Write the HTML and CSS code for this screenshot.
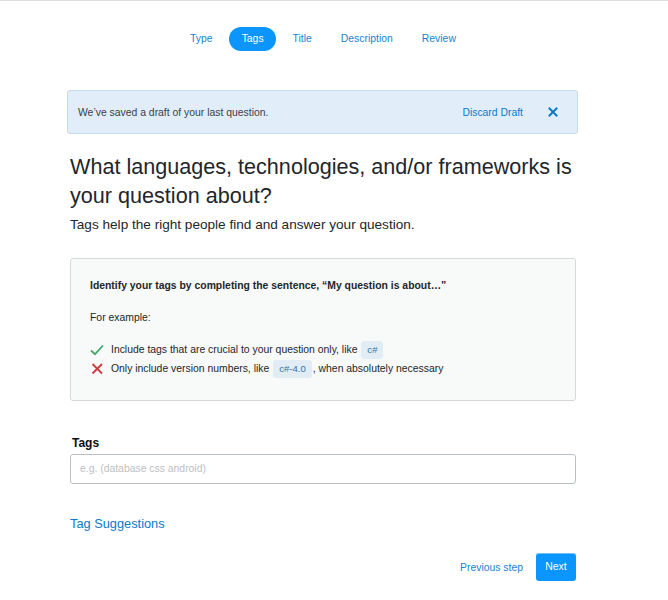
FILE: index.html
```html
<!DOCTYPE html>
<html>
<head>
<meta charset="utf-8">
<link rel="stylesheet" href="styles.css">
</head>
<body>
<div class="page">
  <nav class="steps">
    <a class="step">Type</a>
    <a class="step active">Tags</a>
    <a class="step">Title</a>
    <a class="step">Description</a>
    <a class="step">Review</a>
  </nav>

  <div class="notice">
    <span class="notice-text">We’ve saved a draft of your last question.</span>
    <a class="discard">Discard Draft</a>
    <span class="close">
      <svg width="10" height="10" viewBox="0 0 10 10"><path d="M1.5 1.5 L8.5 8.5 M8.5 1.5 L1.5 8.5" stroke="#0a7acc" stroke-width="2" stroke-linecap="square" fill="none"/></svg>
    </span>
  </div>

  <h1 class="title">What languages, technologies, and/or frameworks is your question about?</h1>
  <p class="subtitle">Tags help the right people find and answer your question.</p>

  <div class="guide">
    <p class="guide-head">Identify your tags by completing the sentence, “My question is about…”</p>
    <p class="guide-example">For example:</p>
    <ul class="rules">
      <li class="rule">
        <svg class="icon" width="14" height="12" viewBox="0 0 14 12"><path d="M1 6.5 L5 10.2 L13 1.5" stroke="#48a868" stroke-width="1.8" fill="none"/></svg>
        <span>Include tags that are crucial to your question only, like <code class="chip">c#</code></span>
      </li>
      <li class="rule">
        <svg class="icon" width="14" height="12" viewBox="0 0 14 12"><path d="M2.5 1 L12 10.5 M12 1 L2.5 10.5" stroke="#d0393e" stroke-width="1.8" fill="none"/></svg>
        <span>Only include version numbers, like <code class="chip">c#-4.0</code>, when absolutely necessary</span>
      </li>
    </ul>
  </div>

  <label class="field-label">Tags</label>
  <div class="input">e.g. (database css android)</div>

  <a class="suggest">Tag Suggestions</a>

  <div class="actions">
    <a class="prev">Previous step</a>
    <span class="next">Next</span>
  </div>
</div>
</body>
</html>
```

FILE: styles.css
```css
* { box-sizing: border-box; }
html, body { margin: 0; padding: 0; background: #fff; }
body {
  font-family: "Liberation Sans", Arial, sans-serif;
  color: #232629;
  border-top: 1px solid #dcdfe2;
}
.page {
  width: 506px;
  margin-left: 70px;
  padding-top: 26px;
}
.steps {
  display: flex;
  justify-content: center;
  gap: 4px;
}
.step {
  height: 24px;
  line-height: 24px;
  padding: 0 12.5px;
  border-radius: 1000px;
  font-size: 10.4px;
  color: #1a7fd4;
}
.step.active {
  background: #0a95ff;
  color: #fff;
}
.notice {
  margin: 39px -2px 0 -3px;
  height: 44px;
  display: flex;
  align-items: center;
  background: #e1eefa;
  border: 1px solid #c5dbee;
  border-radius: 3px;
  padding: 0 10px;
  font-size: 10.4px;
}
.notice-text { flex: 1; color: #3b4045; }
.discard { color: #0a7acc; margin-right: 25px; }
.close { display: flex; width: 10px; margin-right: 9px; }
.title {
  margin: 18px 0 0;
  font-size: 21.6px;
  line-height: 29px;
  font-weight: normal;
  color: #232629;
}
.subtitle {
  margin: 6px 0 0;
  font-size: 13.6px;
  line-height: 17px;
  color: #232629;
}
.guide {
  margin-top: 25px;
  height: 143px;
  background: #f8f9f9;
  border: 1px solid #d6d9dc;
  border-radius: 3px;
  padding: 19px 19px 0;
  font-size: 10.4px;
  color: #232629;
}
.guide p { margin: 0; line-height: 15px; }
.guide-head { font-weight: bold; }
.guide-example { margin-top: 17px !important; }
.rules { list-style: none; margin: 15px 0 0; padding: 0; }
.rule {
  display: flex;
  align-items: center;
  height: 19px;
  line-height: 19px;
}
.icon { margin-right: 7px; flex: none; }
.chip {
  display: inline-block;
  font-family: "Liberation Sans", Arial, sans-serif;
  font-size: 9.6px;
  line-height: 18px;
  height: 18px;
  padding: 0 6px;
  background: #e1ecf4;
  color: #39739d;
  border-radius: 3px;
  vertical-align: middle;
  margin: 0 1px;
}
.field-label {
  display: block;
  margin-top: 34px;
  margin-left: 2px;
  font-size: 12px;
  line-height: 16px;
  font-weight: bold;
  color: #0c0d0e;
}
.input {
  margin-top: 3px;
  height: 30px;
  border: 1px solid #babfc4;
  border-radius: 3px;
  padding: 0 9px;
  line-height: 28px;
  font-size: 10.4px;
  color: #bbc0c4;
}
.suggest {
  display: block;
  margin-top: 31px;
  font-size: 12.8px;
  line-height: 17px;
  color: #0a7acc;
}
.actions {
  margin-top: 21px;
  display: flex;
  justify-content: flex-end;
  align-items: center;
}
.prev {
  font-size: 10.4px;
  color: #1a7fd4;
  margin-right: 13px;
}
.next {
  width: 40px;
  height: 28px;
  line-height: 28px;
  text-align: center;
  background: #0a95ff;
  color: #fff;
  font-size: 10.4px;
  border-radius: 3px;
  box-shadow: inset 0 1px 0 rgba(255,255,255,0.4);
}
```
